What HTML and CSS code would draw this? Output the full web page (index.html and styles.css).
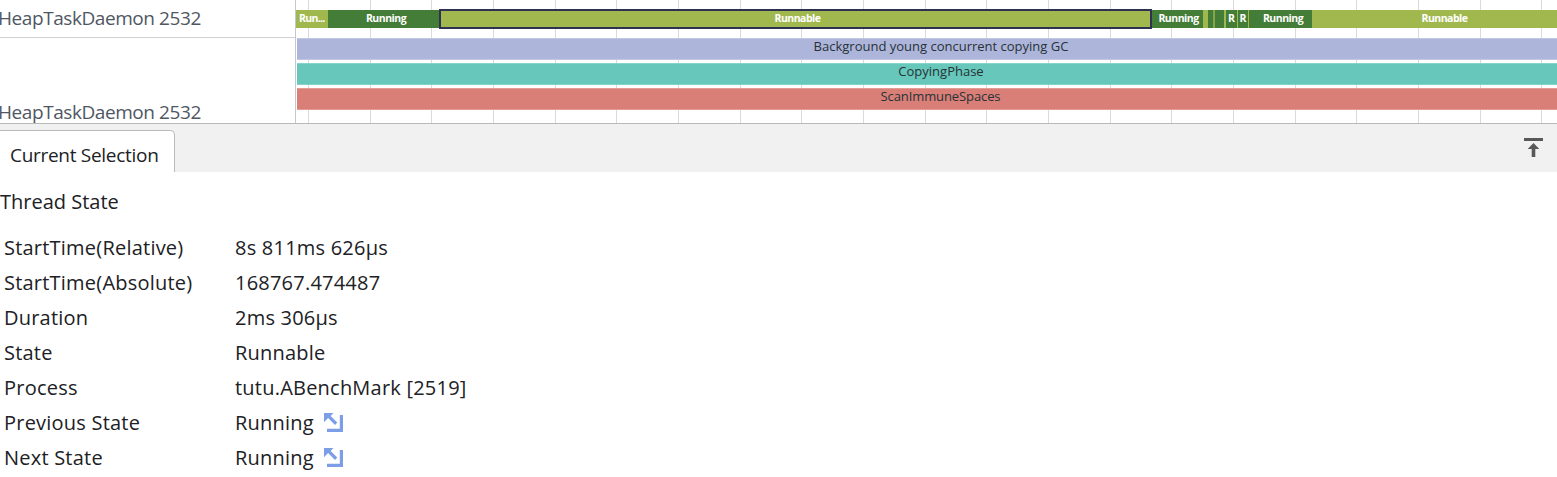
FILE: index.html
```html
<!DOCTYPE html>
<html lang="en">
<head>
<meta charset="utf-8">
<title>Trace viewer</title>
<link rel="stylesheet" href="styles.css">
</head>
<body>
<main class="viewer">
  <section class="timeline">
    <div class="names">
      <div class="name name-state">HeapTaskDaemon 2532</div>
      <div class="name name-slices">HeapTaskDaemon 2532</div>
    </div>
    <div class="tracks">
      <div class="states">
        <span class="seg runnable clipped" style="width:32px">Run...</span>
        <span class="seg running nudged" style="width:111px">Running</span>
        <span class="seg runnable selected" style="width:713px">Runnable</span>
        <span class="seg running nudged-sm" style="width:51px">Running</span>
        <span class="seg runnable" style="width:5px"></span>
        <span class="seg running" style="width:5px"></span>
        <span class="seg runnable soft" style="width:2px"></span>
        <span class="seg running" style="width:9px"></span>
        <span class="seg runnable" style="width:2px"></span>
        <span class="seg running letter" style="width:11px">R</span>
        <span class="seg runnable" style="width:1px"></span>
        <span class="seg running letter" style="width:10px">R</span>
        <span class="seg runnable" style="width:1px"></span>
        <span class="seg running" style="width:5px"></span>
        <span class="seg running" style="width:58px">Running</span>
        <span class="seg runnable last">Runnable</span>
      </div>
      <div class="slices">
        <div class="slice lavender">Background young concurrent copying GC</div>
        <div class="slice teal">CopyingPhase</div>
        <div class="slice coral">ScanImmuneSpaces</div>
      </div>
    </div>
  </section>
  <header class="tabs">
    <div class="tab">Current Selection</div>
    <svg class="expand" width="19" height="19" viewBox="0 0 19 19"><path d="M0 0H19V3H0ZM9.5 5L15.3 11H11.3V19H7.7V11H3.7Z"/></svg>
  </header>
  <section class="details">
    <h1 class="heading">Thread State</h1>
    <dl class="props">
      <dt>StartTime(Relative)</dt><dd>8s 811ms 626µs</dd>
      <dt>StartTime(Absolute)</dt><dd>168767.474487</dd>
      <dt>Duration</dt><dd>2ms 306µs</dd>
      <dt>State</dt><dd>Runnable</dd>
      <dt>Process</dt><dd>tutu.ABenchMark [2519]</dd>
      <dt>Previous State</dt><dd>Running<svg class="jump" width="20" height="20" viewBox="0 0 20 20"><path d="M0 0H9.5L6.6 2.9L13.3 9.6L11 12L4.1 5.1L0 9.2ZM15.8 2H19V19H3V15.8H15.8Z"/></svg></dd>
      <dt>Next State</dt><dd>Running<svg class="jump" width="20" height="20" viewBox="0 0 20 20"><path d="M0 0H9.5L6.6 2.9L13.3 9.6L11 12L4.1 5.1L0 9.2ZM15.8 2H19V19H3V15.8H15.8Z"/></svg></dd>
    </dl>
  </section>
</main>
</body>
</html>
```
FILE: styles.css
```css
* { box-sizing: border-box; }
body {
  margin: 0;
  background: #fff;
  color: #202124;
  font-family: "Open Sans", "Noto Sans", sans-serif;
  font-size: 20px;
  overflow: hidden;
}
.viewer { display: flex; flex-direction: column; height: 477px; }
.timeline { display: flex; height: 124px; border-bottom: 1px solid #b8baba; }
.names {
  width: 296px;
  flex: none;
  border-right: 1px solid #c4c8cd;
  color: #4f5763;
  white-space: nowrap;
}
.name { font-size: 19px; line-height: 26px; letter-spacing: -0.43px; text-indent: -2px; }
.name-state { height: 38px; padding-top: 5px; border-bottom: 1px solid #cfd2d5; }
.name-slices { padding-top: 61px; }
.tracks {
  flex: 1;
  min-width: 0;
  background: repeating-linear-gradient(90deg, #d9dae0 0 1px, transparent 1px 61.66px) 12px 0 no-repeat;
}
.states { display: flex; height: 38px; padding-top: 10px; }
.seg {
  flex: none;
  height: 18px;
  overflow: hidden;
  color: #fff;
  font-size: 10.5px;
  font-weight: 700;
  letter-spacing: -0.5px;
  line-height: 16px;
  text-align: center;
  white-space: nowrap;
}
.running { background: #437d38; }
.runnable { background: #a1b84f; }
.soft { background: #86a548; }
.clipped { text-align: left; padding-left: 3px; letter-spacing: -0.7px; }
.letter { letter-spacing: 0; }
.nudged { padding-left: 5px; }
.nudged-sm { padding-left: 2px; }
.last { flex: 1; padding-left: 20px; }
.selected {
  height: 20px;
  margin-top: -1px;
  padding-left: 4px;
  border: 2px solid #2f3152;
  line-height: 14px;
}
.slices { display: flex; flex-direction: column; gap: 3px; padding-left: 1px; }
.slice {
  height: 22px;
  border-top: 1px solid;
  border-bottom: 1px solid;
  color: #263238;
  font-size: 13px;
  line-height: 14px;
  text-align: center;
  padding-left: 28px;
}
.lavender { background: #aeb5da; border-color: #c2c7e3; }
.teal { background: #67c7ba; border-color: #86d3c9; }
.coral { background: #da7f77; border-color: #e39b95; padding-left: 27px; letter-spacing: -0.1px; }
.tabs {
  display: flex;
  justify-content: space-between;
  align-items: flex-end;
  height: 48px;
  background: #f1f1f1;
}
.tab {
  width: 175px;
  height: 42px;
  padding: 11px 0 0 10px;
  background: #fff;
  border: 1px solid #b9bbbb;
  border-width: 1px 1px 0 0;
  border-radius: 0 5px 0 0;
  font-size: 19px;
  letter-spacing: -0.29px;
  line-height: 27px;
  white-space: nowrap;
}
.expand { margin: 0 14px 15px 0; fill: #585858; }
.heading { margin: 0; padding-top: 16px; font-size: 20px; font-weight: 400; line-height: 28px; }
.props {
  display: grid;
  grid-template-columns: 231px 1fr;
  grid-auto-rows: 35px;
  margin: 14px 0 0;
  padding-left: 4px;
  letter-spacing: 0.22px;
  line-height: 35px;
  white-space: nowrap;
}
.props dd { display: flex; margin: 0; }
.jump { margin: 8px 0 0 10px; fill: #7b9ee7; }
```
